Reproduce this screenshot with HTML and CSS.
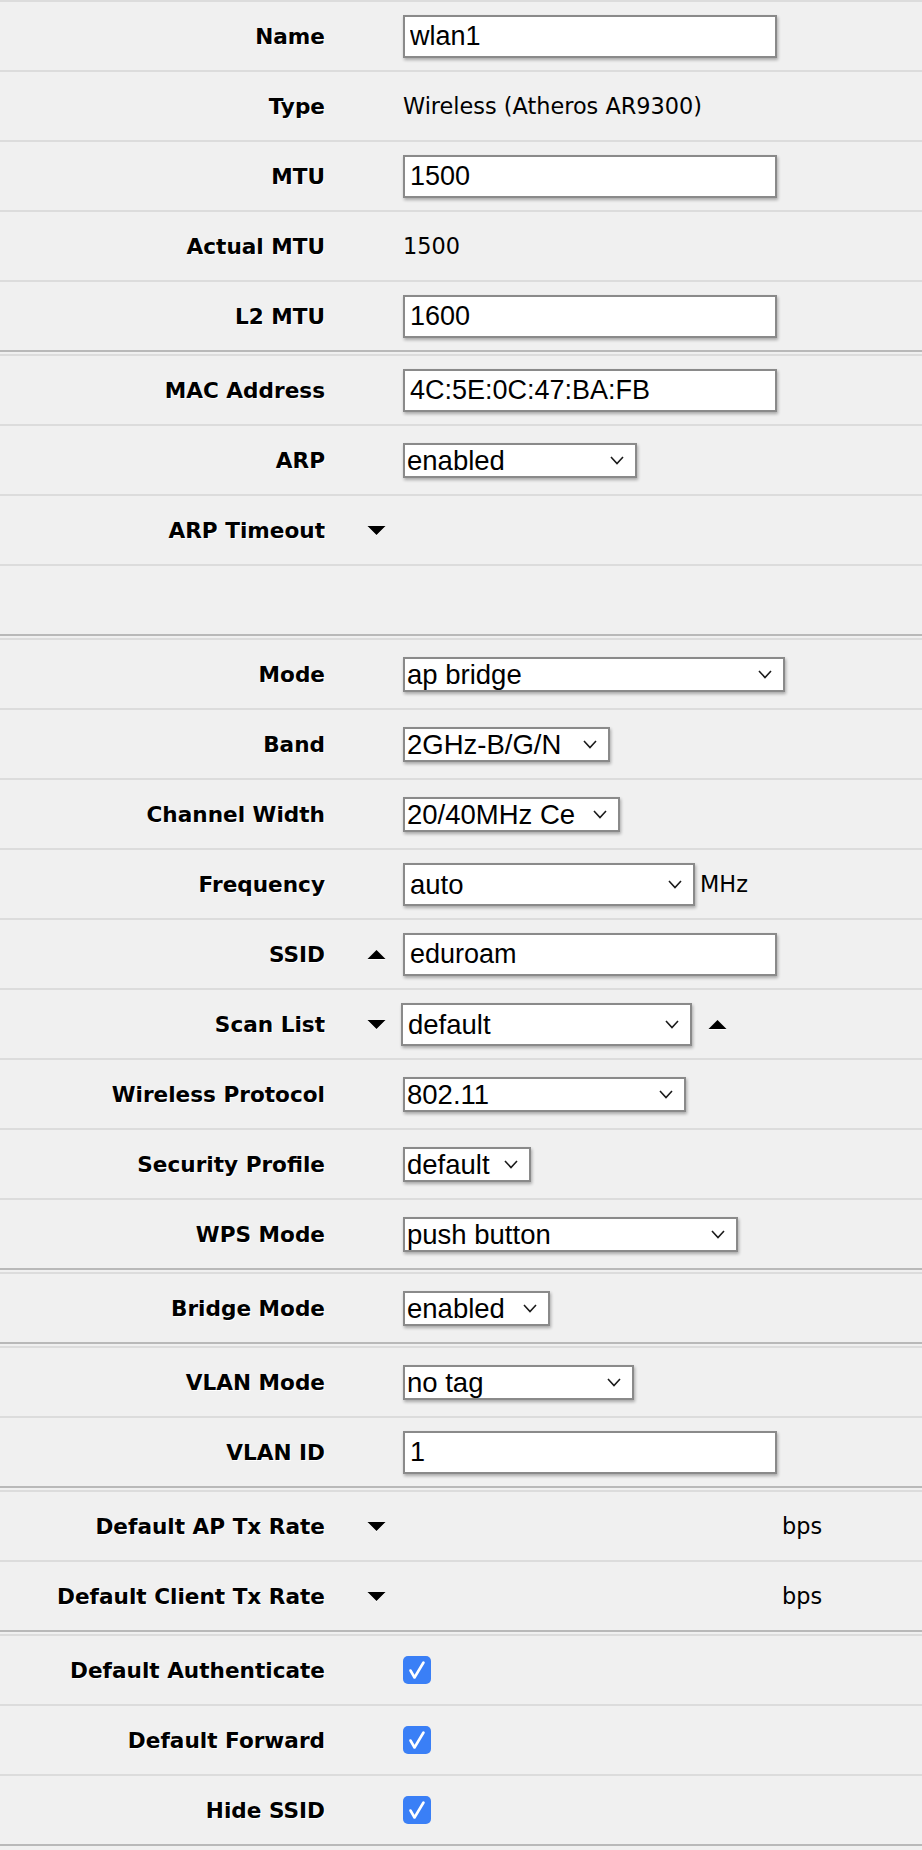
FILE: index.html
```html
<!DOCTYPE html>
<html lang="en">
<head>
<meta charset="utf-8">
<title>wlan1</title>
<link rel="stylesheet" href="styles.css">
</head>
<body>
<div class="form">

<section class="group">
  <div class="row"><span class="lbl">Name</span><span class="mark"></span><div class="ctl"><input class="field" type="text" value="wlan1"></div></div>
  <div class="row"><span class="lbl">Type</span><span class="mark"></span><div class="ctl"><span class="text">Wireless (Atheros AR9300)</span></div></div>
  <div class="row"><span class="lbl">MTU</span><span class="mark"></span><div class="ctl"><input class="field" type="text" value="1500"></div></div>
  <div class="row"><span class="lbl">Actual MTU</span><span class="mark"></span><div class="ctl"><span class="text">1500</span></div></div>
  <div class="row"><span class="lbl">L2 MTU</span><span class="mark"></span><div class="ctl"><input class="field" type="text" value="1600"></div></div>
</section>

<section class="group">
  <div class="row"><span class="lbl">MAC Address</span><span class="mark"></span><div class="ctl"><input class="field" type="text" value="4C:5E:0C:47:BA:FB"></div></div>
  <div class="row"><span class="lbl">ARP</span><span class="mark"></span><div class="ctl"><span class="sel w-arp"><select><option>enabled</option></select><svg class="chev" viewBox="0 0 14 9"><polyline points="1,1 7,7.5 13,1"/></svg></span></div></div>
  <div class="row"><span class="lbl">ARP Timeout</span><span class="mark"><svg class="tri" viewBox="0 0 20 10"><polygon points="0,0 20,0 10,10"/></svg></span><div class="ctl"></div></div>
  <div class="row"><span class="lbl"></span><span class="mark"></span><div class="ctl"></div></div>
</section>

<section class="group">
  <div class="row"><span class="lbl">Mode</span><span class="mark"></span><div class="ctl"><span class="sel w-mode"><select><option>ap bridge</option></select><svg class="chev" viewBox="0 0 14 9"><polyline points="1,1 7,7.5 13,1"/></svg></span></div></div>
  <div class="row"><span class="lbl">Band</span><span class="mark"></span><div class="ctl"><span class="sel w-band"><select><option>2GHz-B/G/N</option></select><svg class="chev" viewBox="0 0 14 9"><polyline points="1,1 7,7.5 13,1"/></svg></span></div></div>
  <div class="row"><span class="lbl">Channel Width</span><span class="mark"></span><div class="ctl"><span class="sel w-chan"><select><option>20/40MHz Ce</option></select><svg class="chev" viewBox="0 0 14 9"><polyline points="1,1 7,7.5 13,1"/></svg></span></div></div>
  <div class="row"><span class="lbl">Frequency</span><span class="mark"></span><div class="ctl"><span class="sel tall w-freq"><select><option>auto</option></select><svg class="chev" viewBox="0 0 14 9"><polyline points="1,1 7,7.5 13,1"/></svg></span><span class="text unit">MHz</span></div></div>
  <div class="row"><span class="lbl">SSID</span><span class="mark"><svg class="tri" viewBox="0 0 20 10"><polygon points="0,10 20,10 10,0"/></svg></span><div class="ctl"><input class="field" type="text" value="eduroam"></div></div>
  <div class="row"><span class="lbl">Scan List</span><span class="mark"><svg class="tri" viewBox="0 0 20 10"><polygon points="0,0 20,0 10,10"/></svg></span><div class="ctl"><span class="sel tall w-scan"><select><option>default</option></select><svg class="chev" viewBox="0 0 14 9"><polyline points="1,1 7,7.5 13,1"/></svg></span><svg class="tri after" viewBox="0 0 20 10"><polygon points="0,10 20,10 10,0"/></svg></div></div>
  <div class="row"><span class="lbl">Wireless Protocol</span><span class="mark"></span><div class="ctl"><span class="sel w-proto"><select><option>802.11</option></select><svg class="chev" viewBox="0 0 14 9"><polyline points="1,1 7,7.5 13,1"/></svg></span></div></div>
  <div class="row"><span class="lbl">Security Profile</span><span class="mark"></span><div class="ctl"><span class="sel w-sec"><select><option>default</option></select><svg class="chev" viewBox="0 0 14 9"><polyline points="1,1 7,7.5 13,1"/></svg></span></div></div>
  <div class="row"><span class="lbl">WPS Mode</span><span class="mark"></span><div class="ctl"><span class="sel w-wps"><select><option>push button</option></select><svg class="chev" viewBox="0 0 14 9"><polyline points="1,1 7,7.5 13,1"/></svg></span></div></div>
</section>

<section class="group">
  <div class="row"><span class="lbl">Bridge Mode</span><span class="mark"></span><div class="ctl"><span class="sel w-bridge"><select><option>enabled</option></select><svg class="chev" viewBox="0 0 14 9"><polyline points="1,1 7,7.5 13,1"/></svg></span></div></div>
</section>

<section class="group">
  <div class="row"><span class="lbl">VLAN Mode</span><span class="mark"></span><div class="ctl"><span class="sel w-vlan"><select><option>no tag</option></select><svg class="chev" viewBox="0 0 14 9"><polyline points="1,1 7,7.5 13,1"/></svg></span></div></div>
  <div class="row"><span class="lbl">VLAN ID</span><span class="mark"></span><div class="ctl"><input class="field" type="text" value="1"></div></div>
</section>

<section class="group">
  <div class="row"><span class="lbl">Default AP Tx Rate</span><span class="mark"><svg class="tri" viewBox="0 0 20 10"><polygon points="0,0 20,0 10,10"/></svg></span><div class="ctl"><span class="ghost"></span><span class="text">bps</span></div></div>
  <div class="row"><span class="lbl">Default Client Tx Rate</span><span class="mark"><svg class="tri" viewBox="0 0 20 10"><polygon points="0,0 20,0 10,10"/></svg></span><div class="ctl"><span class="ghost"></span><span class="text">bps</span></div></div>
</section>

<section class="group last">
  <div class="row"><span class="lbl">Default Authenticate</span><span class="mark"></span><div class="ctl"><span class="check" role="checkbox" aria-checked="true"><svg viewBox="0 0 28 28"><polyline points="7.5,14.5 11.5,21.5 20.5,6.5"/></svg></span></div></div>
  <div class="row"><span class="lbl">Default Forward</span><span class="mark"></span><div class="ctl"><span class="check" role="checkbox" aria-checked="true"><svg viewBox="0 0 28 28"><polyline points="7.5,14.5 11.5,21.5 20.5,6.5"/></svg></span></div></div>
  <div class="row"><span class="lbl">Hide SSID</span><span class="mark"></span><div class="ctl"><span class="check" role="checkbox" aria-checked="true"><svg viewBox="0 0 28 28"><polyline points="7.5,14.5 11.5,21.5 20.5,6.5"/></svg></span></div></div>
</section>

</div>
</body>
</html>
```

FILE: styles.css
```css
html, body {
  margin: 0;
  padding: 0;
  background: #f0f0f0;
}

.form {
  width: 100%;
}

.group {
  border-bottom: 2px solid #b9b9b9;
  margin-bottom: 2px;
}

.row {
  box-sizing: border-box;
  height: 70px;
  border-top: 2px solid #dcdcdc;
  display: grid;
  grid-template-columns: 325px 78px 1fr;
  align-items: center;
}

.lbl {
  font: bold 21.6px "DejaVu Sans", Verdana, sans-serif;
  color: #000;
  text-align: right;
  text-shadow: 1px 1px 0 #fff;
  white-space: nowrap;
}

.mark {
  display: flex;
  justify-content: flex-end;
  align-items: center;
  padding-right: 17px;
}

.tri {
  width: 19px;
  height: 9px;
  fill: #000;
  filter: drop-shadow(0 1px 0 #fff);
}

.tri.after {
  margin-left: 16px;
}

.ctl {
  display: flex;
  align-items: center;
  min-width: 0;
}

.text {
  font: 22.4px "DejaVu Sans", Verdana, sans-serif;
  color: #000;
  white-space: nowrap;
}

.unit {
  margin-left: 5px;
}

.field {
  box-sizing: border-box;
  width: 374px;
  height: 43px;
  margin: 0;
  padding: 0 5px;
  border: 2px solid #8a8a8a;
  border-radius: 0;
  background: #fff;
  box-shadow: 1px 2px 3px rgba(0, 0, 0, 0.3);
  font: 27px "Liberation Sans", Arial, sans-serif;
  color: #000;
  outline: none;
}

.sel {
  position: relative;
  display: inline-block;
  box-sizing: border-box;
  height: 35px;
  border: 2px solid #8a8a8a;
  background: #fff;
  box-shadow: 1px 2px 3px rgba(0, 0, 0, 0.3);
}

.sel.tall {
  height: 43px;
}

.sel select {
  -webkit-appearance: none;
  appearance: none;
  box-sizing: border-box;
  display: block;
  width: 100%;
  height: 100%;
  margin: 0;
  padding: 0 34px 0 2px;
  border: 0;
  border-radius: 0;
  background: transparent;
  font: 27.5px "Liberation Sans", Arial, sans-serif;
  color: #000;
  outline: none;
}

.sel.tall select {
  padding-left: 5px;
}

.chev {
  position: absolute;
  right: 11px;
  top: 50%;
  width: 14px;
  height: 9px;
  margin-top: -4px;
  fill: none;
  stroke: #1a1a1a;
  stroke-width: 1.6;
  pointer-events: none;
}

.w-arp { width: 234px; }
.w-mode { width: 382px; }
.w-band { width: 207px; }
.w-chan { width: 217px; }
.w-freq { width: 292px; }
.w-scan { width: 291px; margin-left: -2px; }
.w-proto { width: 283px; }
.w-sec { width: 128px; }
.w-wps { width: 335px; }
.w-bridge { width: 147px; }
.w-vlan { width: 231px; }

.ghost {
  display: inline-block;
  width: 379px;
}

.check {
  display: inline-flex;
  width: 28px;
  height: 28px;
  border-radius: 5px;
  background: #3a7ff6;
}

.check svg {
  width: 28px;
  height: 28px;
  fill: none;
  stroke: #fff;
  stroke-width: 2.6;
  stroke-linecap: round;
  stroke-linejoin: round;
}
```
